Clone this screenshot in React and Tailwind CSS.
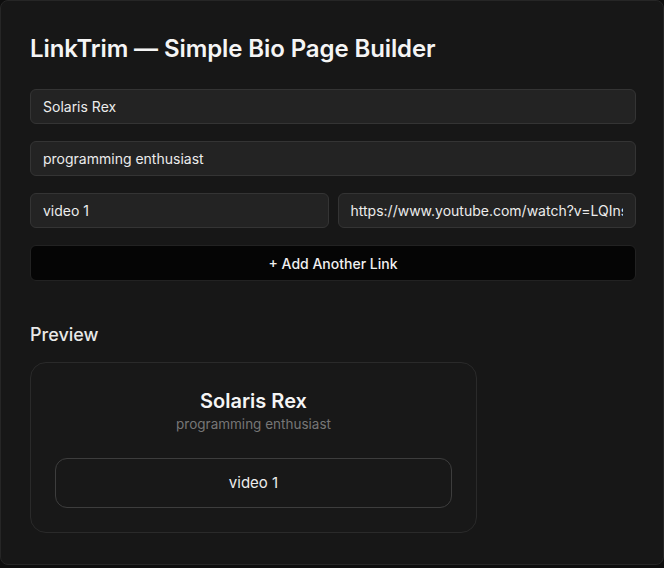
import React, { useState } from "react";

const inputCls =
  "h-[35px] w-full rounded-md border border-[#343434] bg-[#232323] px-3 text-[14px] text-[#ececec] outline-none";

const App = () => {
  const [name, setName] = useState("Solaris Rex");
  const [bio, setBio] = useState("programming enthusiast");
  const [links, setLinks] = useState([
    { title: "video 1", url: "https://www.youtube.com/watch?v=LQInsdf8Wk" },
  ]);

  const updateLink = (i, key, value) => {
    setLinks((prev) => prev.map((l, idx) => (idx === i ? { ...l, [key]: value } : l)));
  };

  const addLink = () => setLinks((prev) => [...prev, { title: "", url: "" }]);

  return (
    <div
      className="min-h-[568px] bg-[#0e0e0e]"
      style={{ fontFamily: "Inter, 'Liberation Sans', sans-serif" }}>
      <div className="h-[565px] rounded-lg border border-[#262626] bg-[#171717] pl-[29px] pr-[27px] pt-[33px]">
        <h1 className="text-[24px] font-semibold leading-[30px] tracking-[-0.1px] text-[#f5f5f5]">
          LinkTrim — Simple Bio Page Builder
        </h1>

        <div className="mt-[25px] flex flex-col gap-[17px]">
          <input className={inputCls} value={name} onChange={(e) => setName(e.target.value)} />
          <input className={inputCls} value={bio} onChange={(e) => setBio(e.target.value)} />
          {links.map((l, i) => (
            <div key={i} className="flex gap-[9px]">
              <input
                className={inputCls}
                value={l.title}
                onChange={(e) => updateLink(i, "title", e.target.value)}
              />
              <input
                className={inputCls}
                value={l.url}
                onChange={(e) => updateLink(i, "url", e.target.value)}
              />
            </div>
          ))}
          <button
            onClick={addLink}
            className="h-[36px] w-full rounded-md border border-[#222] bg-[#050505] text-[14px] font-medium text-[#f0f0f0]">
            + Add Another Link
          </button>
        </div>

        <h2 className="mt-[42px] text-[18px] font-medium leading-[24px] text-[#e8e8e8]">Preview</h2>

        <div className="mt-[15px] w-[447px] rounded-2xl border border-[#2a2a2a] bg-[#181818] px-6 pb-6 pt-[25px]">
          <div className="text-center text-[20px] font-semibold leading-[26px] text-[#f5f5f5]">
            {name}
          </div>
          <div className="mt-[1px] text-center text-[13.5px] leading-[18px] text-[#767676]">{bio}</div>
          <div className="mt-[25px] flex flex-col gap-3">
            {links.map((l, i) => (
              <a
                key={i}
                className="flex h-[50px] items-center justify-center rounded-xl border border-[#3d3d3d] text-[15px] text-[#ececec]">
                {l.title}
              </a>
            ))}
          </div>
        </div>
      </div>
    </div>
  );
};

export default App;
